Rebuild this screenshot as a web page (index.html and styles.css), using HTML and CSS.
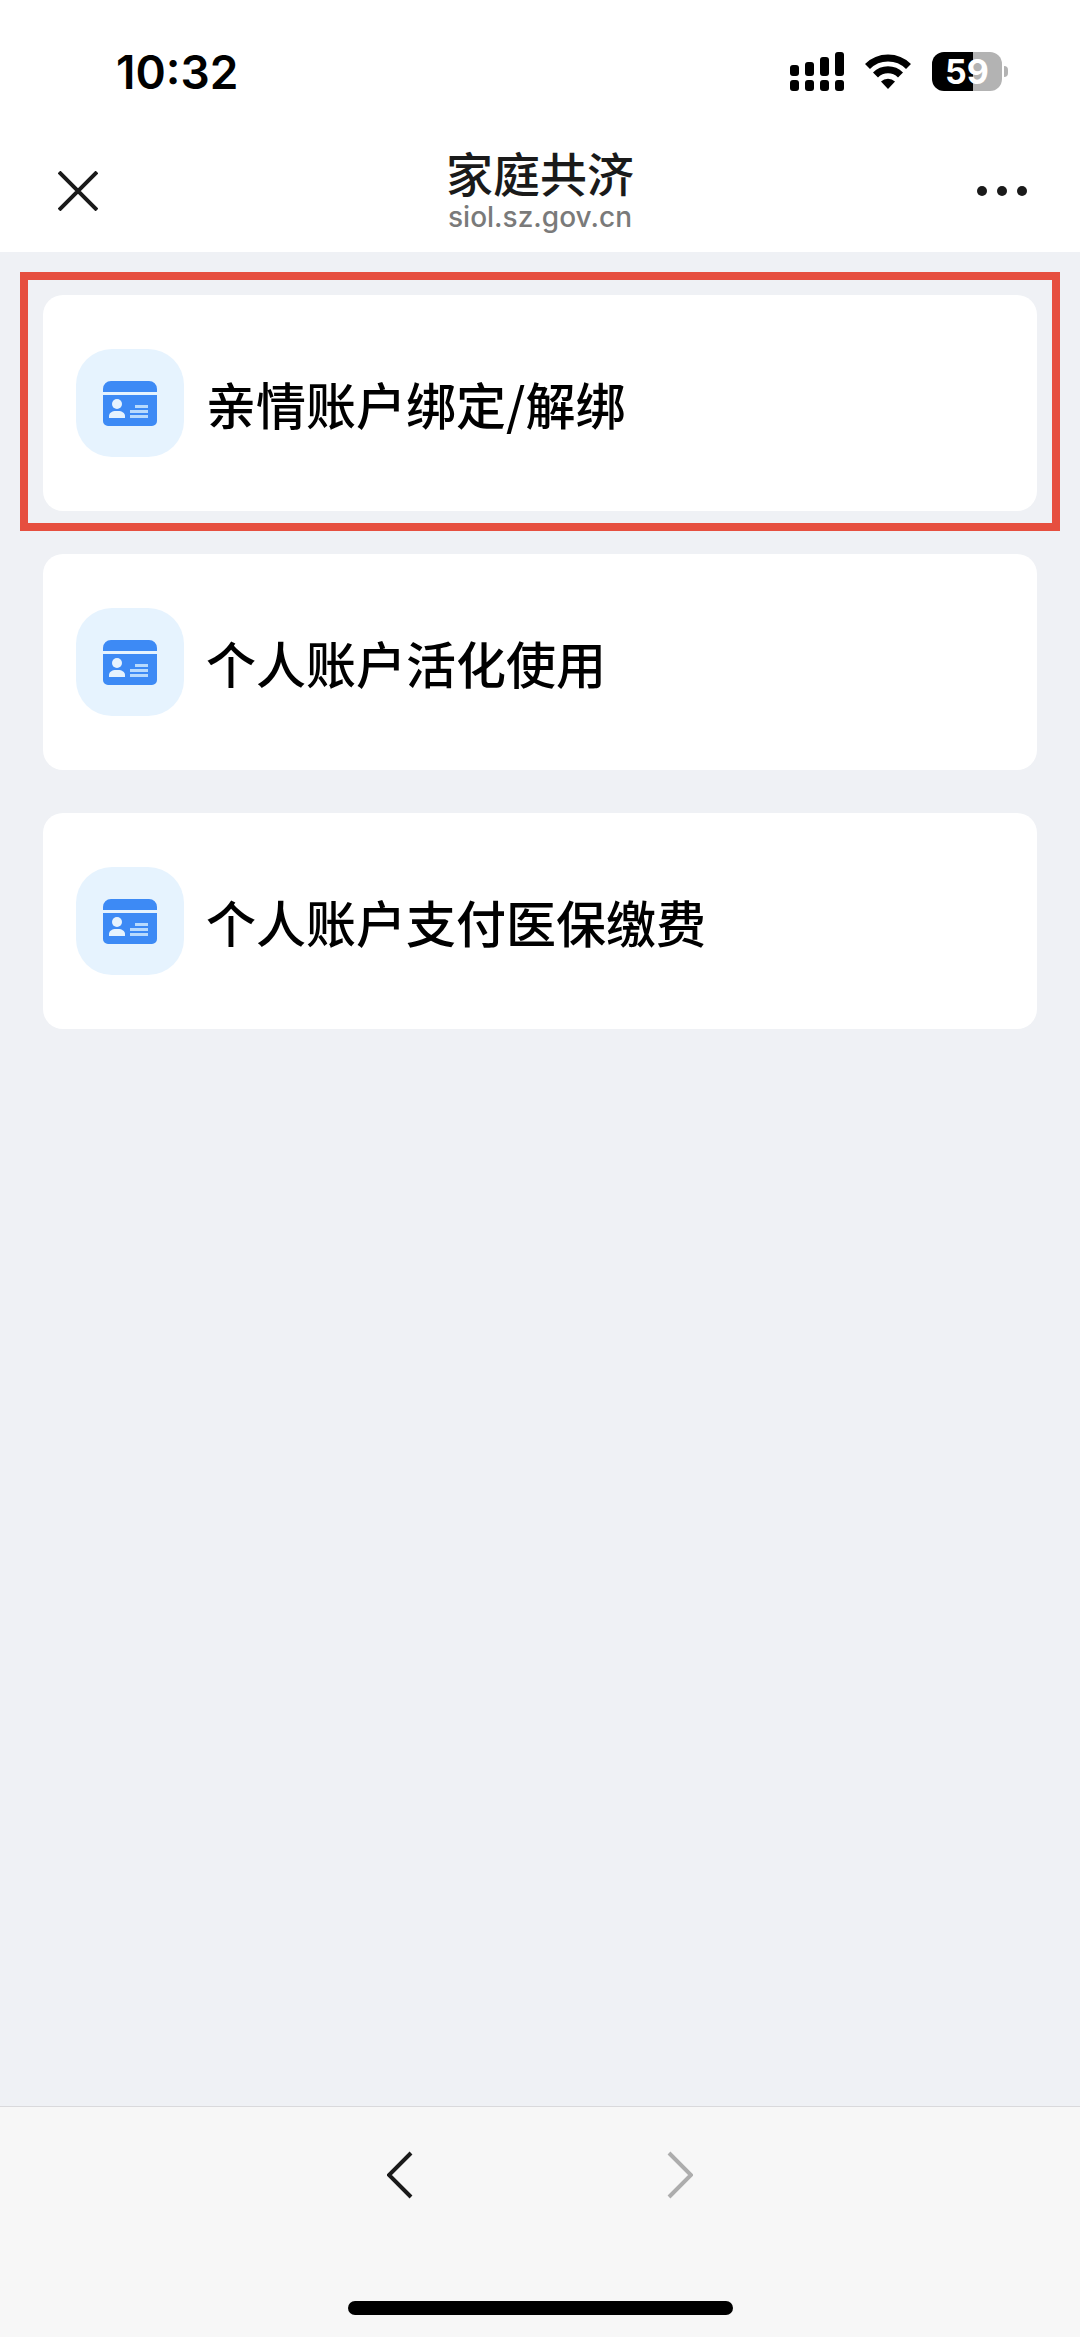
FILE: index.html
```html
<!DOCTYPE html>
<html lang="zh-CN">
<head>
    <meta charset="UTF-8">
    <meta name="viewport" content="width=device-width, initial-scale=1.0">
    <title>家庭共济</title>
    <link rel="stylesheet" href="styles.css">
</head>
<body>

    <svg class="sprite" aria-hidden="true">
        <symbol id="id-card" viewBox="0 0 54 45">
            <path fill="#3d8af5" d="M8 0h38a8 8 0 0 1 8 8v3H0V8a8 8 0 0 1 8-8zM0 14h54v26a5 5 0 0 1-5 5H5a5 5 0 0 1-5-5z"/>
            <circle fill="#e6f3fe" cx="14" cy="23" r="5"/>
            <path fill="#e6f3fe" d="M6 37v-2c0-3 3-5 7-5h2c4 0 7 2 7 5v2z"/>
            <path fill="#b8dafd" d="M32 24h13v3H32zM27 29h18v3H27zM27 34h18v3H27z"/>
        </symbol>
    </svg>

    <div class="status-bar">
        <span class="time">10:32</span>
        <div class="status-icons">
            <svg width="54" height="39" viewBox="0 0 54 39" aria-hidden="true">
                <rect x="0" y="13" width="9" height="11" rx="3"/>
                <rect x="15" y="10" width="9" height="14" rx="3"/>
                <rect x="30" y="5" width="9" height="19" rx="3"/>
                <rect x="45" y="0" width="9" height="24" rx="3"/>
                <rect x="0" y="28" width="9" height="11" rx="3"/>
                <rect x="15" y="28" width="9" height="11" rx="3"/>
                <rect x="30" y="28" width="9" height="11" rx="3"/>
                <rect x="45" y="28" width="9" height="11" rx="3"/>
            </svg>
            <svg width="46" height="35" viewBox="0 0 46 35" aria-hidden="true">
                <path fill="none" stroke="#000" stroke-width="7" d="M2.500 12.500a29 29 0 0 1 41 0M10.500 21a17.500 17.500 0 0 1 25 0"/>
                <path d="M16 27.500a10 10 0 0 1 14 0L23 35z"/>
            </svg>
            <div class="battery"><span class="battery-level">59</span></div>
        </div>
    </div>

    <header class="nav-bar">
        <button class="nav-btn" aria-label="关闭">
            <svg width="40" height="40" viewBox="0 0 40 40"><path d="M1 1l38 38M39 1L1 39"/></svg>
        </button>
        <div class="nav-title">
            <h1>家庭共济</h1>
            <p>siol.sz.gov.cn</p>
        </div>
        <button class="nav-btn" aria-label="更多">
            <svg class="dots" width="50" height="10" viewBox="0 0 50 10"><circle cx="5" cy="5" r="5"/><circle cx="25" cy="5" r="5"/><circle cx="45" cy="5" r="5"/></svg>
        </button>
    </header>

    <main>
        <ul class="menu">
            <li class="highlight">
                <a class="card" href="#">
                    <span class="card-icon"><svg width="54" height="45"><use href="#id-card"/></svg></span>
                    亲情账户绑定/解绑
                </a>
            </li>
            <li>
                <a class="card" href="#">
                    <span class="card-icon"><svg width="54" height="45"><use href="#id-card"/></svg></span>
                    个人账户活化使用
                </a>
            </li>
            <li>
                <a class="card" href="#">
                    <span class="card-icon"><svg width="54" height="45"><use href="#id-card"/></svg></span>
                    个人账户支付医保缴费
                </a>
            </li>
        </ul>
    </main>

    <footer class="toolbar">
        <div class="toolbar-btns">
            <button class="nav-btn" aria-label="后退">
                <svg width="26" height="48" viewBox="0 0 26 48"><path d="M24 2L2 24l22 22"/></svg>
            </button>
            <button class="nav-btn" aria-label="前进" disabled>
                <svg width="26" height="48" viewBox="0 0 26 48"><path d="M2 2l22 22L2 46"/></svg>
            </button>
        </div>
        <div class="home-indicator"></div>
    </footer>

</body>
</html>
```

FILE: styles.css
```css
* {
    box-sizing: border-box;
    margin: 0;
    padding: 0;
}

body {
    display: flex;
    flex-direction: column;
    min-height: 100vh;
    background: #eff1f5;
    color: #000;
    font-family: Inter, "Noto Sans CJK SC", sans-serif;
}

svg {
    display: block;
}

.sprite {
    position: absolute;
    width: 0;
    height: 0;
}

/* 状态栏 */
.status-bar {
    display: flex;
    justify-content: space-between;
    align-items: center;
    height: 143px;
    padding: 0 71px 0 116px;
    background: #fff;
}

.time {
    font-size: 46px;
    font-weight: 600;
}

.status-icons {
    display: flex;
    align-items: center;
    gap: 21px;
}

.battery {
    position: relative;
    width: 70px;
    height: 39px;
    margin-right: 7px;
    border-radius: 12px;
    background: linear-gradient(to right, #000 59%, #b3b3b3 59%);
    color: #fff;
    font-size: 34px;
    font-weight: 700;
    line-height: 39px;
    text-align: center;
}

.battery::after {
    content: "";
    position: absolute;
    top: 14px;
    right: -6px;
    width: 4px;
    height: 11px;
    border-radius: 0 4px 4px 0;
    background: #b3b3b3;
}

/* 导航栏 */
.nav-bar {
    display: flex;
    justify-content: space-between;
    align-items: center;
    height: 109px;
    padding: 0 38px 14px;
    background: #fff;
}

.nav-btn {
    display: flex;
    justify-content: center;
    align-items: center;
    width: 80px;
    height: 80px;
    border: none;
    background: none;
    cursor: pointer;
}

.nav-btn path {
    fill: none;
    stroke: #1a1a1a;
    stroke-width: 4;
}

.nav-btn .dots {
    fill: #1a1a1a;
}

.nav-btn:disabled path {
    stroke: #adadad;
}

.nav-title {
    text-align: center;
}

.nav-title h1 {
    color: #1a1a1a;
    font-size: 47px;
    font-weight: 500;
    line-height: 52px;
}

.nav-title p {
    color: #7a7a7a;
    font-size: 28px;
    font-weight: 500;
    line-height: 32px;
}

main {
    flex: 1;
    padding: 43px;
}

.menu {
    display: flex;
    flex-direction: column;
    gap: 43px;
    list-style: none;
}

.card {
    display: flex;
    align-items: center;
    gap: 22px;
    height: 216px;
    padding: 0 33px;
    border-radius: 20px;
    background: #fff;
    color: #000;
    font-family: "Noto Sans CJK SC", sans-serif;
    font-size: 50px;
    font-weight: 500;
    text-decoration: none;
}

.card-icon {
    display: flex;
    justify-content: center;
    align-items: center;
    width: 108px;
    height: 108px;
    border-radius: 36px;
    background: #e6f3fe;
}

/* 红框标注 */
.highlight {
    position: relative;
}

.highlight::after {
    content: "";
    position: absolute;
    inset: -23px -23px -20px;
    border: 8px solid #e64f3f;
    pointer-events: none;
}

.toolbar {
    display: flex;
    flex-direction: column;
    align-items: center;
    justify-content: space-between;
    height: 231px;
    padding: 28px 0 22px;
    border-top: 1px solid #d9d9dc;
    background: #f7f7f7;
}

.toolbar-btns {
    display: flex;
    gap: 200px;
}

.home-indicator {
    width: 385px;
    height: 14px;
    border-radius: 7px;
    background: #000;
}
```
